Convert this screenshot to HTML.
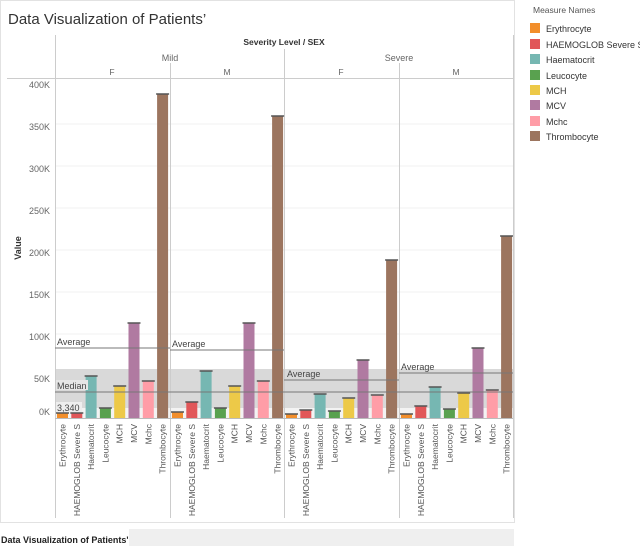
<!DOCTYPE html>
<html><head><meta charset="utf-8"><style>
body{margin:0;width:640px;height:546px;overflow:hidden;background:#fff;font-family:"Liberation Sans",sans-serif;}
svg{position:absolute;left:0;top:0}
</style></head><body>
<svg width="640" height="546" viewBox="0 0 640 546" font-family="Liberation Sans, sans-serif">
<rect x="0.5" y="0.5" width="514" height="522" fill="#fff" stroke="#e2e2e2"/>
<text x="8" y="24" font-size="15" fill="#333">Data Visualization of Patients’</text>
<!-- headers -->
<text x="284" y="45" font-size="8.5" font-weight="bold" fill="#333" text-anchor="middle">Severity Level / SEX</text>
<text x="170" y="61" font-size="9" fill="#666" text-anchor="middle">Mild</text>
<text x="399" y="61" font-size="9" fill="#666" text-anchor="middle">Severe</text>
<text x="112" y="75" font-size="8.5" fill="#666" text-anchor="middle">F</text>
<text x="227" y="75" font-size="8.5" fill="#666" text-anchor="middle">M</text>
<text x="341" y="75" font-size="8.5" fill="#666" text-anchor="middle">F</text>
<text x="456" y="75" font-size="8.5" fill="#666" text-anchor="middle">M</text>
<line x1="7" y1="78.5" x2="513" y2="78.5" stroke="#ccc"/>
<!-- gridlines -->
<g stroke="#f0f0f0"><line x1="55" x2="513" y1="124" y2="124"/><line x1="55" x2="513" y1="166" y2="166"/><line x1="55" x2="513" y1="208" y2="208"/><line x1="55" x2="513" y1="250" y2="250"/><line x1="55" x2="513" y1="292" y2="292"/><line x1="55" x2="513" y1="334" y2="334"/></g>
<!-- bands -->
<rect x="55" y="369" width="458" height="39" fill="#d9d9d9"/>
<rect x="55" y="408" width="458" height="10" fill="#f3f3f3"/>
<!-- vertical lines -->
<g stroke="#ccc"><line x1="55.5" y1="35" x2="55.5" y2="518"/><line x1="170.5" y1="63" x2="170.5" y2="518"/><line x1="284.5" y1="49" x2="284.5" y2="518"/><line x1="399.5" y1="63" x2="399.5" y2="518"/><line x1="513.5" y1="35" x2="513.5" y2="518"/></g>
<!-- y axis -->
<g font-size="9" fill="#666" text-anchor="end">
<text x="50" y="88">400K</text><text x="50" y="130">350K</text><text x="50" y="172">300K</text><text x="50" y="214">250K</text><text x="50" y="256">200K</text><text x="50" y="298">150K</text><text x="50" y="340">100K</text><text x="50" y="382">50K</text><text x="50" y="415">0K</text></g>
<text transform="translate(21,248) rotate(-90)" font-size="9" font-weight="bold" fill="#333" text-anchor="middle">Value</text>
<!-- bars -->
<g id="bars">
<rect x="57" y="413" width="11" height="5" fill="#f28e2b"/><rect x="71.3" y="413" width="11" height="5" fill="#e15759"/><rect x="85.6" y="376" width="11" height="42" fill="#76b7b2"/><rect x="99.9" y="408" width="11" height="10" fill="#59a14f"/><rect x="114.2" y="386" width="11" height="32" fill="#edc948"/><rect x="128.5" y="323" width="11" height="95" fill="#b07aa1"/><rect x="142.8" y="381" width="11" height="37" fill="#ff9da7"/><rect x="157.1" y="94" width="11" height="324" fill="#9c755f"/>
<rect x="172" y="412" width="11" height="6" fill="#f28e2b"/><rect x="186.3" y="402" width="11" height="16" fill="#e15759"/><rect x="200.6" y="371" width="11" height="47" fill="#76b7b2"/><rect x="214.9" y="408" width="11" height="10" fill="#59a14f"/><rect x="229.2" y="386" width="11" height="32" fill="#edc948"/><rect x="243.5" y="323" width="11" height="95" fill="#b07aa1"/><rect x="257.8" y="381" width="11" height="37" fill="#ff9da7"/><rect x="272.1" y="116" width="11" height="302" fill="#9c755f"/>
<rect x="286" y="414" width="11" height="4" fill="#f28e2b"/><rect x="300.3" y="410" width="11" height="8" fill="#e15759"/><rect x="314.6" y="394" width="11" height="24" fill="#76b7b2"/><rect x="328.9" y="411" width="11" height="7" fill="#59a14f"/><rect x="343.2" y="398" width="11" height="20" fill="#edc948"/><rect x="357.5" y="360" width="11" height="58" fill="#b07aa1"/><rect x="371.8" y="395" width="11" height="23" fill="#ff9da7"/><rect x="386.1" y="260" width="11" height="158" fill="#9c755f"/>
<rect x="401" y="414" width="11" height="4" fill="#f28e2b"/><rect x="415.3" y="406" width="11" height="12" fill="#e15759"/><rect x="429.6" y="387" width="11" height="31" fill="#76b7b2"/><rect x="443.9" y="409" width="11" height="9" fill="#59a14f"/><rect x="458.2" y="393" width="11" height="25" fill="#edc948"/><rect x="472.5" y="348" width="11" height="70" fill="#b07aa1"/><rect x="486.8" y="390" width="11" height="28" fill="#ff9da7"/><rect x="501.1" y="236" width="11" height="182" fill="#9c755f"/>
</g>
<!-- caps -->
<g stroke="#555" stroke-width="1.5">
<line x1="56" x2="69" y1="413" y2="413"/><line x1="70.3" x2="83.3" y1="413" y2="413"/><line x1="84.6" x2="97.6" y1="376" y2="376"/><line x1="98.9" x2="111.9" y1="408" y2="408"/><line x1="113.2" x2="126.2" y1="386" y2="386"/><line x1="127.5" x2="140.5" y1="323" y2="323"/><line x1="141.8" x2="154.8" y1="381" y2="381"/><line x1="156.1" x2="169.1" y1="94" y2="94"/>
<line x1="171" x2="184" y1="412" y2="412"/><line x1="185.3" x2="198.3" y1="402" y2="402"/><line x1="199.6" x2="212.6" y1="371" y2="371"/><line x1="213.9" x2="226.9" y1="408" y2="408"/><line x1="228.2" x2="241.2" y1="386" y2="386"/><line x1="242.5" x2="255.5" y1="323" y2="323"/><line x1="256.8" x2="269.8" y1="381" y2="381"/><line x1="271.1" x2="284.1" y1="116" y2="116"/>
<line x1="285" x2="298" y1="414" y2="414"/><line x1="299.3" x2="312.3" y1="410" y2="410"/><line x1="313.6" x2="326.6" y1="394" y2="394"/><line x1="327.9" x2="340.9" y1="411" y2="411"/><line x1="342.2" x2="355.2" y1="398" y2="398"/><line x1="356.5" x2="369.5" y1="360" y2="360"/><line x1="370.8" x2="383.8" y1="395" y2="395"/><line x1="385.1" x2="398.1" y1="260" y2="260"/>
<line x1="400" x2="413" y1="414" y2="414"/><line x1="414.3" x2="427.3" y1="406" y2="406"/><line x1="428.6" x2="441.6" y1="387" y2="387"/><line x1="442.9" x2="455.9" y1="409" y2="409"/><line x1="457.2" x2="470.2" y1="393" y2="393"/><line x1="471.5" x2="484.5" y1="348" y2="348"/><line x1="485.8" x2="498.8" y1="390" y2="390"/><line x1="500.1" x2="513" y1="236" y2="236"/>
</g>
<line x1="55" x2="513" y1="418.5" y2="418.5" stroke="#bbb"/>
<!-- ref lines -->
<g stroke="#777" stroke-width="1">
<line x1="55" x2="170" y1="348" y2="348"/><line x1="170" x2="284" y1="350" y2="350"/><line x1="284" x2="399" y1="380" y2="380"/><line x1="399" x2="513" y1="373" y2="373"/>
<line x1="55" x2="513" y1="392" y2="392"/></g>
<g font-size="9" fill="#444">
<text x="57" y="345">Average</text><text x="172" y="347">Average</text><text x="287" y="377">Average</text><text x="401" y="370">Average</text>
<rect x="56" y="380" width="32" height="10" fill="#e6e6e6"/><text x="57" y="389">Median</text>
<rect x="56" y="402" width="26" height="10" fill="#eee"/><text x="57" y="411">3,340</text></g>
<!-- x labels -->
<g font-size="8.5" fill="#555" text-anchor="end">
<text transform="translate(65.5,424) rotate(-90)">Erythrocyte</text><text transform="translate(79.8,424) rotate(-90)">HAEMOGLOB Severe S</text><text transform="translate(94.1,424) rotate(-90)">Haematocrit</text><text transform="translate(108.4,424) rotate(-90)">Leucocyte</text><text transform="translate(122.7,424) rotate(-90)">MCH</text><text transform="translate(137,424) rotate(-90)">MCV</text><text transform="translate(151.3,424) rotate(-90)">Mchc</text><text transform="translate(165.6,424) rotate(-90)">Thrombocyte</text>
<text transform="translate(180.5,424) rotate(-90)">Erythrocyte</text><text transform="translate(194.8,424) rotate(-90)">HAEMOGLOB Severe S</text><text transform="translate(209.1,424) rotate(-90)">Haematocrit</text><text transform="translate(223.4,424) rotate(-90)">Leucocyte</text><text transform="translate(237.7,424) rotate(-90)">MCH</text><text transform="translate(252,424) rotate(-90)">MCV</text><text transform="translate(266.3,424) rotate(-90)">Mchc</text><text transform="translate(280.6,424) rotate(-90)">Thrombocyte</text>
<text transform="translate(294.5,424) rotate(-90)">Erythrocyte</text><text transform="translate(308.8,424) rotate(-90)">HAEMOGLOB Severe S</text><text transform="translate(323.1,424) rotate(-90)">Haematocrit</text><text transform="translate(337.4,424) rotate(-90)">Leucocyte</text><text transform="translate(351.7,424) rotate(-90)">MCH</text><text transform="translate(366,424) rotate(-90)">MCV</text><text transform="translate(380.3,424) rotate(-90)">Mchc</text><text transform="translate(394.6,424) rotate(-90)">Thrombocyte</text>
<text transform="translate(409.5,424) rotate(-90)">Erythrocyte</text><text transform="translate(423.8,424) rotate(-90)">HAEMOGLOB Severe S</text><text transform="translate(438.1,424) rotate(-90)">Haematocrit</text><text transform="translate(452.4,424) rotate(-90)">Leucocyte</text><text transform="translate(466.7,424) rotate(-90)">MCH</text><text transform="translate(481,424) rotate(-90)">MCV</text><text transform="translate(495.3,424) rotate(-90)">Mchc</text><text transform="translate(509.6,424) rotate(-90)">Thrombocyte</text>
</g>
<!-- legend -->
<text x="533" y="13" font-size="8.5" fill="#555">Measure Names</text>
<g font-size="9" fill="#333">
<rect x="530" y="23" width="10" height="10" fill="#f28e2b"/><text x="546" y="32">Erythrocyte</text>
<rect x="530" y="39" width="10" height="10" fill="#e15759"/><text x="546" y="48">HAEMOGLOB Severe S</text>
<rect x="530" y="54" width="10" height="10" fill="#76b7b2"/><text x="546" y="63">Haematocrit</text>
<rect x="530" y="70" width="10" height="10" fill="#59a14f"/><text x="546" y="79">Leucocyte</text>
<rect x="530" y="85" width="10" height="10" fill="#edc948"/><text x="546" y="94">MCH</text>
<rect x="530" y="100" width="10" height="10" fill="#b07aa1"/><text x="546" y="109">MCV</text>
<rect x="530" y="116" width="10" height="10" fill="#ff9da7"/><text x="546" y="125">Mchc</text>
<rect x="530" y="131" width="10" height="10" fill="#9c755f"/><text x="546" y="140">Thrombocyte</text>
</g>
<!-- bottom tab -->
<rect x="0" y="525" width="640" height="21" fill="#fff"/>
<rect x="129" y="529" width="385" height="17" fill="#efefef"/>
<text x="1" y="543" font-size="9" font-weight="bold" fill="#222">Data Visualization of Patients'</text>
</svg>
</body></html>
